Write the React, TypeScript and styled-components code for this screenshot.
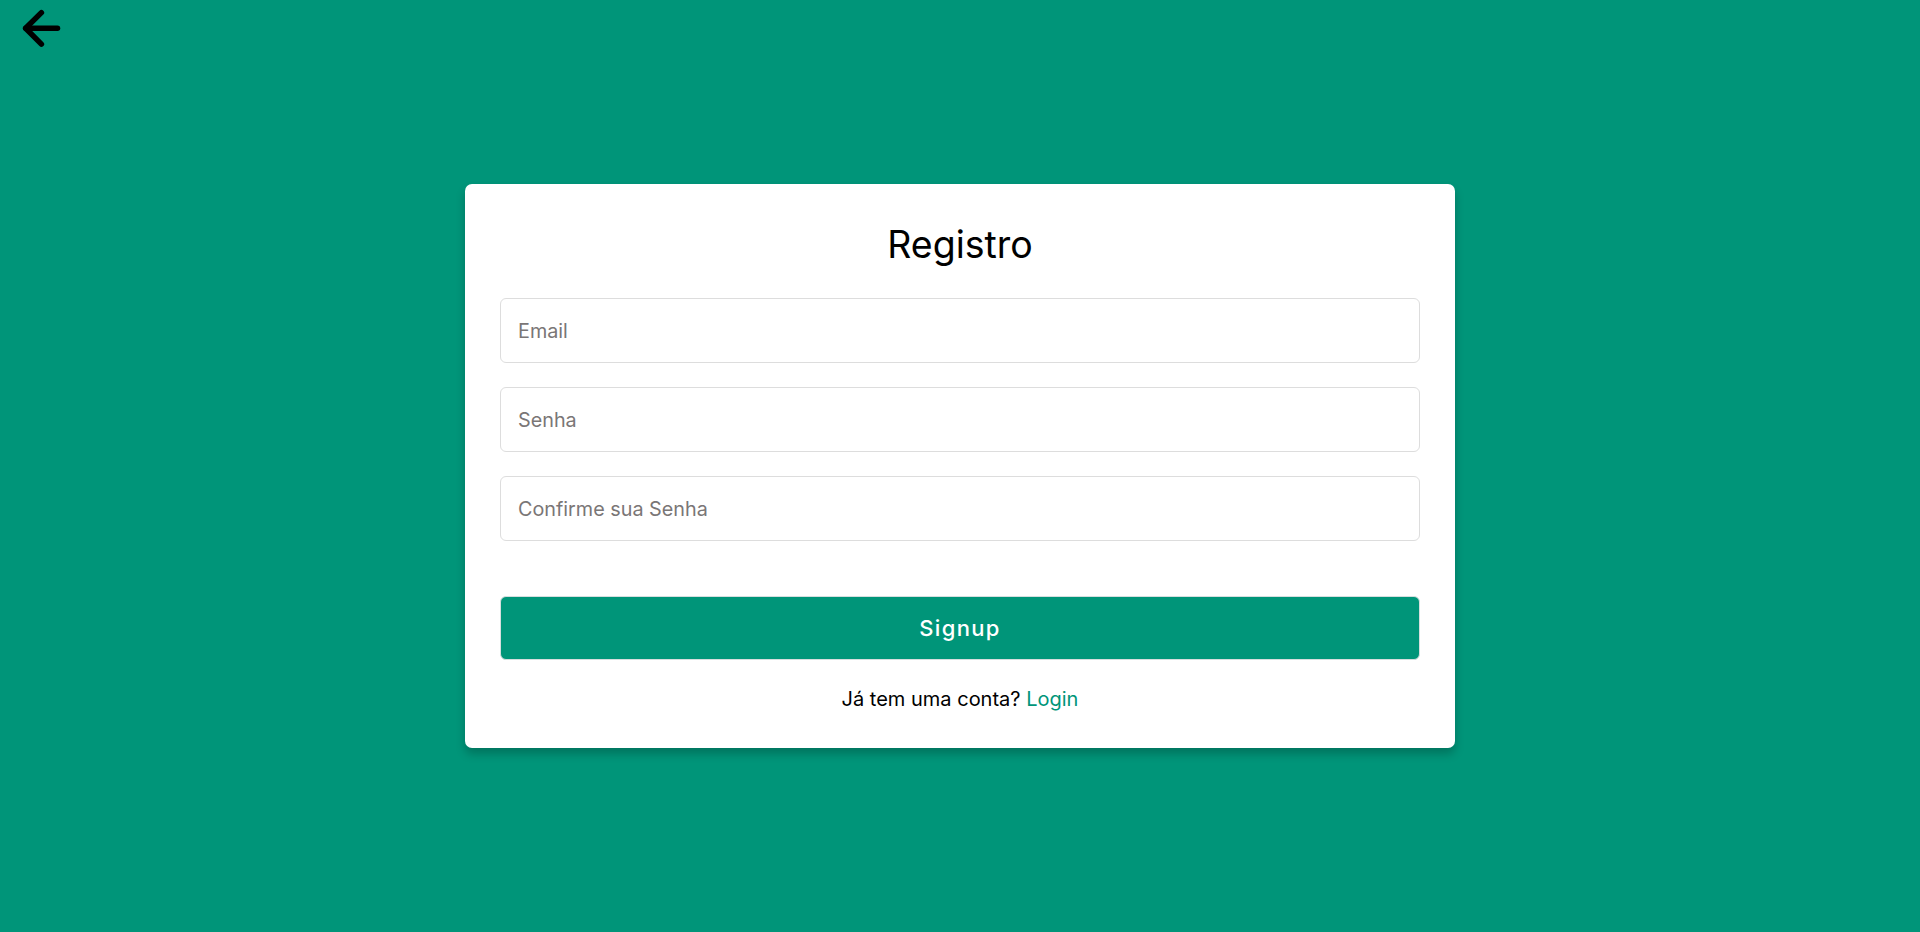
import React from "react";
import styled, { createGlobalStyle } from "styled-components";

const GREEN = "#009579";

const GlobalStyle = createGlobalStyle`
  * { box-sizing: border-box; }
  html, body { margin: 0; padding: 0; }
  body {
    background: ${GREEN};
    font-family: Inter, "Noto Sans", "Liberation Sans", sans-serif;
  }
`;

const Page = styled.main`
  position: relative;
  min-height: 932px;
  display: flex;
  align-items: center;
  justify-content: center;
`;

const BackLink = styled.a`
  position: absolute;
  top: 0;
  left: 15px;
  display: flex;
  color: #000;
  cursor: pointer;
`;

const Card = styled.section`
  width: 990px;
  height: 564px;
  background: #fff;
  border-radius: 7px;
  padding: 35px;
  box-shadow: 0 6px 10px rgba(0, 0, 0, 0.22);
  display: flex;
  flex-direction: column;
`;

const Title = styled.h2`
  margin: 0 0 27px;
  height: 52px;
  line-height: 52px;
  font-size: 37.5px;
  font-weight: 400;
  color: #000;
  text-align: center;
`;

const Form = styled.form`
  display: flex;
  flex-direction: column;
  gap: 24px;
`;

const Input = styled.input`
  height: 65px;
  width: 100%;
  border: 1px solid #dddddd;
  border-radius: 6px;
  padding: 0 17px;
  font-family: inherit;
  font-size: 19.8px;
  color: #333;
  outline: none;
  &::placeholder {
    color: #7a7676;
  }
`;

const Button = styled.button`
  margin-top: 55px;
  height: 64px;
  width: 100%;
  border: 1px solid #d6dede;
  border-radius: 6px;
  background: ${GREEN};
  color: #fff;
  font-family: inherit;
  font-size: 22px;
  font-weight: 500;
  letter-spacing: 1.3px;
  cursor: pointer;
`;

const Footer = styled.p`
  margin: 26px 0 0;
  line-height: 27px;
  font-size: 20px;
  color: #000;
  text-align: center;
`;

const LoginLink = styled.a`
  color: ${GREEN};
  text-decoration: none;
  cursor: pointer;
`;

function BackArrow() {
  return (
    <svg width="50" height="50" viewBox="0 0 50 50" fill="none" stroke="currentColor"
      strokeWidth="5.5" strokeLinecap="round" strokeLinejoin="round">
      <path d="M42.5 28.3H10.8" />
      <path d="M26.4 12.6L10.6 28.3l15.8 15.8" />
    </svg>
  );
}

export default function App() {
  return (
    <>
      <GlobalStyle />
      <Page>
        <BackLink aria-label="Voltar">
          <BackArrow />
        </BackLink>
        <Card>
          <Title>Registro</Title>
          <Form onSubmit={(e) => e.preventDefault()}>
            <Input type="email" placeholder="Email" />
            <Input type="password" placeholder="Senha" />
            <Input type="password" placeholder="Confirme sua Senha" />
          </Form>
          <Button type="button">Signup</Button>
          <Footer>
            Já tem uma conta? <LoginLink>Login</LoginLink>
          </Footer>
        </Card>
      </Page>
    </>
  );
}
